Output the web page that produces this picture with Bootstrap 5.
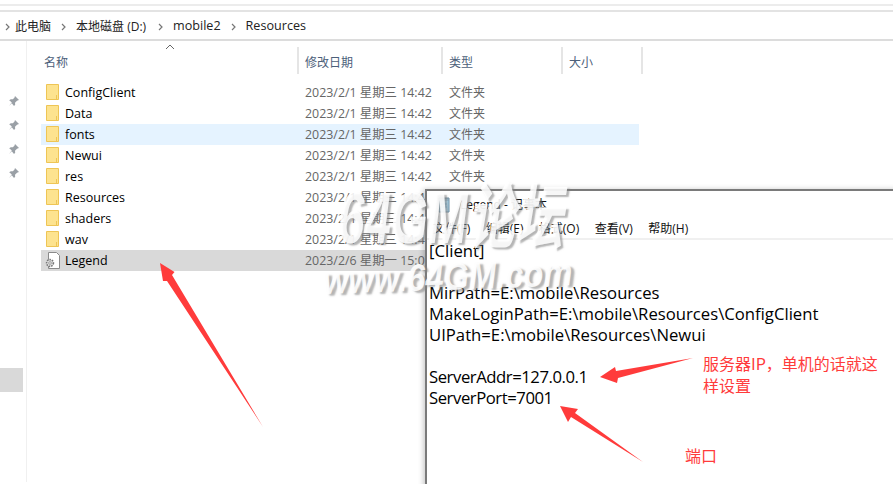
<!DOCTYPE html>
<html lang="zh-CN">
<head>
<meta charset="utf-8">
<title>Resources</title>
<link href="https://cdn.jsdelivr.net/npm/bootstrap@5.3.0/dist/css/bootstrap.min.css" rel="stylesheet">
<style>
html,body{height:484px;overflow:hidden;background:#fff}
body{font-family:"Open Sans","Noto Sans CJK SC",sans-serif;font-size:12px;color:#000;position:relative;width:893px}
.top-strip{height:12px;background:#fff;position:relative;border-bottom:2px solid #e3e3e3}
.top-strip::before{content:"";display:block;height:6px;border-bottom:2px solid #ececec}
.crumbs{height:29px;border-bottom:2px solid #dcdcdc;font-size:12px;color:#222;padding-top:2px}
.crumb-sep{width:25px;text-align:center}
.crumb-sep svg,.crumb-lead svg{display:block;margin:auto}
.crumb-lead{width:15px}
.crumb-lat{font-size:12.6px}
.crumb-disk{width:72px;flex:none;white-space:nowrap}
.main-area{height:441px}
.side-col{width:27px;border-right:1px solid #f0f0f0;padding-top:54px;flex:none;position:relative}
.side-col svg{display:block;margin:0 0 12px 8px}
.side-sel{width:23px;height:24px;background:#d9d9d9;margin-top:189px}
.list-col{width:613px;padding-left:14px}
.head-row{height:43px;margin-top:-2px;padding-top:8px;color:#4c607a;font-size:12px;position:relative}
.head-cell{height:27px;border-right:2px solid #e5e5e5;padding-left:3px;line-height:27px;flex:none}
.head-cell span{position:relative;top:2px;display:block;line-height:27px}
.hc1{width:258px}.hc2{width:144px;padding-left:6px}.hc3{width:120px;padding-left:6px}.hc4{width:80px;padding-left:6px}
.sort-caret{position:absolute;left:124px;top:5px}
.file-row{height:21px;line-height:21px;width:598px;color:#000;font-size:12.5px}
.file-row.hl{background:#e5f3ff}
.file-row.sel{background:#d9d9d9}
.ico{width:24px;padding-left:5px;flex:none;padding-top:2px}
.ico svg{display:block}
.ico-gear{margin-left:-2px}
.nm{width:240px;flex:none}
.dt{width:144px;flex:none;color:#666;font-size:12.4px}
.tp{color:#666;font-size:12px}
.np-win{position:absolute;left:425px;top:189px;width:480px;height:300px;background:#fff;border:1px solid #7a7a7a;border-width:2px 0 0 2px;box-shadow:-2px 0 5px rgba(0,0,0,.2)}
.np-title{height:28px;padding-left:11px;gap:10px;font-size:12px;color:#111}
.np-menu{height:19px;font-size:12px;color:#111;padding-left:6px;gap:15.4px;border-bottom:2px solid #f0f0f0;box-sizing:content-box}
.np-text{font-family:"Open Sans","Noto Sans CJK SC",sans-serif;font-size:16.7px;line-height:21px;padding:0 0 0 2px;color:#000;white-space:pre}
.np-num{letter-spacing:-.45px}
.marks{position:absolute;left:0;top:0;pointer-events:none}
.note{position:absolute;color:#ff3b3b;font-size:16px;line-height:22px;font-family:"Noto Sans CJK SC",sans-serif}
.n1{left:703px;top:352px;width:178px}
.n2{left:685px;top:444px}
.wm{position:absolute;font-style:italic;font-weight:700;color:rgba(255,255,255,.88);text-shadow:4px 2px 2px rgba(130,130,130,.6);white-space:nowrap;font-family:"Liberation Sans","Noto Sans CJK SC",sans-serif;transform-origin:left center}
.w1{left:338px;top:178px;font-size:72px;line-height:80px;transform:scaleX(.66)}
.w2{left:323px;top:258px;font-size:38px;line-height:46px;transform:rotate(-2deg) scaleX(.86)}
</style>
</head>
<body>
<div class="top-strip"></div>
<div class="crumbs d-flex align-items-center">
  <span class="crumb-lead"><svg width="5" height="8" viewBox="0 0 5 8"><path d="M1 1l3 3-3 3" fill="none" stroke="#777" stroke-width="1.2"/></svg></span>
  <span>此电脑</span>
  <span class="crumb-sep"><svg width="5" height="8" viewBox="0 0 5 8"><path d="M1 1l3 3-3 3" fill="none" stroke="#777" stroke-width="1.2"/></svg></span>
  <span class="crumb-disk">本地磁盘 (D:)</span>
  <span class="crumb-sep"><svg width="5" height="8" viewBox="0 0 5 8"><path d="M1 1l3 3-3 3" fill="none" stroke="#777" stroke-width="1.2"/></svg></span>
  <span class="crumb-lat">mobile2</span>
  <span class="crumb-sep"><svg width="5" height="8" viewBox="0 0 5 8"><path d="M1 1l3 3-3 3" fill="none" stroke="#777" stroke-width="1.2"/></svg></span>
  <span class="crumb-lat">Resources</span>
</div>
<div class="main-area d-flex">
  <div class="side-col">
    <svg width="12" height="12" viewBox="0 0 12 12"><path d="M7 1l4 4-2 .7-2 2 .2 2L6 11 3.8 8.2 1 11l2.8-3.6L1.2 5.2l1.6-1 2 .1 1.6-1.6z" fill="#9aa0a6"/></svg>
    <svg width="12" height="12" viewBox="0 0 12 12"><path d="M7 1l4 4-2 .7-2 2 .2 2L6 11 3.8 8.2 1 11l2.8-3.6L1.2 5.2l1.6-1 2 .1 1.6-1.6z" fill="#9aa0a6"/></svg>
    <svg width="12" height="12" viewBox="0 0 12 12"><path d="M7 1l4 4-2 .7-2 2 .2 2L6 11 3.8 8.2 1 11l2.8-3.6L1.2 5.2l1.6-1 2 .1 1.6-1.6z" fill="#9aa0a6"/></svg>
    <svg width="12" height="12" viewBox="0 0 12 12"><path d="M7 1l4 4-2 .7-2 2 .2 2L6 11 3.8 8.2 1 11l2.8-3.6L1.2 5.2l1.6-1 2 .1 1.6-1.6z" fill="#9aa0a6"/></svg>
    <div class="side-sel"></div>
  </div>
  <div class="list-col">
    <div class="head-row d-flex">
      <svg class="sort-caret" width="10" height="6" viewBox="0 0 10 6"><path d="M1 5l4-4 4 4" fill="none" stroke="#666"/></svg>
      <div class="head-cell hc1"><span>名称</span></div>
      <div class="head-cell hc2"><span>修改日期</span></div>
      <div class="head-cell hc3"><span>类型</span></div>
      <div class="head-cell hc4"><span>大小</span></div>
    </div>
    <div class="file-row d-flex"><span class="ico"><svg width="13" height="16" viewBox="0 0 13 16"><path d="M.5.5h12v15H.5z" fill="#fde38f" stroke="#eec555"/><path d="M10.5 11v4.5" stroke="#eec555"/></svg></span><span class="nm">ConfigClient</span><span class="dt">2023/2/1 星期三 14:42</span><span class="tp">文件夹</span></div>
    <div class="file-row d-flex"><span class="ico"><svg width="13" height="16" viewBox="0 0 13 16"><path d="M.5.5h12v15H.5z" fill="#fde38f" stroke="#eec555"/><path d="M10.5 11v4.5" stroke="#eec555"/></svg></span><span class="nm">Data</span><span class="dt">2023/2/1 星期三 14:42</span><span class="tp">文件夹</span></div>
    <div class="file-row hl d-flex"><span class="ico"><svg width="13" height="16" viewBox="0 0 13 16"><path d="M.5.5h12v15H.5z" fill="#fde38f" stroke="#eec555"/><path d="M10.5 11v4.5" stroke="#eec555"/></svg></span><span class="nm">fonts</span><span class="dt">2023/2/1 星期三 14:42</span><span class="tp">文件夹</span></div>
    <div class="file-row d-flex"><span class="ico"><svg width="13" height="16" viewBox="0 0 13 16"><path d="M.5.5h12v15H.5z" fill="#fde38f" stroke="#eec555"/><path d="M10.5 11v4.5" stroke="#eec555"/></svg></span><span class="nm">Newui</span><span class="dt">2023/2/1 星期三 14:42</span><span class="tp">文件夹</span></div>
    <div class="file-row d-flex"><span class="ico"><svg width="13" height="16" viewBox="0 0 13 16"><path d="M.5.5h12v15H.5z" fill="#fde38f" stroke="#eec555"/><path d="M10.5 11v4.5" stroke="#eec555"/></svg></span><span class="nm">res</span><span class="dt">2023/2/1 星期三 14:42</span><span class="tp">文件夹</span></div>
    <div class="file-row d-flex"><span class="ico"><svg width="13" height="16" viewBox="0 0 13 16"><path d="M.5.5h12v15H.5z" fill="#fde38f" stroke="#eec555"/><path d="M10.5 11v4.5" stroke="#eec555"/></svg></span><span class="nm">Resources</span><span class="dt">2023/2/1 星期三 14:42</span><span class="tp">文件夹</span></div>
    <div class="file-row d-flex"><span class="ico"><svg width="13" height="16" viewBox="0 0 13 16"><path d="M.5.5h12v15H.5z" fill="#fde38f" stroke="#eec555"/><path d="M10.5 11v4.5" stroke="#eec555"/></svg></span><span class="nm">shaders</span><span class="dt">2023/2/1 星期三 14:42</span><span class="tp">文件夹</span></div>
    <div class="file-row d-flex"><span class="ico"><svg width="13" height="16" viewBox="0 0 13 16"><path d="M.5.5h12v15H.5z" fill="#fde38f" stroke="#eec555"/><path d="M10.5 11v4.5" stroke="#eec555"/></svg></span><span class="nm">wav</span><span class="dt">2023/2/1 星期三 14:42</span><span class="tp">文件夹</span></div>
    <div class="file-row sel d-flex"><span class="ico"><svg class="ico-gear" width="16" height="17" viewBox="0 0 16 17"><path d="M4.5.5h8l3 3v13h-11z" fill="#fff" stroke="#8a8a8a"/><circle cx="6" cy="11" r="3.4" fill="#e2e2e2" stroke="#777" stroke-width="1.6" stroke-dasharray="1.5 1"/><circle cx="6" cy="11" r="1.3" fill="#fff" stroke="#777" stroke-width=".7"/></svg></span><span class="nm">Legend</span><span class="dt">2023/2/6 星期一 15:07</span><span class="tp">配置设置</span></div>
  </div>
</div>

<div class="np-win">
  <div class="np-title d-flex align-items-center">
    <svg width="12" height="16" viewBox="0 0 12 16"><path d="M1 1h10v14H1z" fill="#a9d6ee" stroke="#6c8ea3"/><path d="M1 3h10M1 1.5h10" stroke="#7f9caf"/><path d="M3 7h6M3 10h6" stroke="#6fb0d6"/></svg>
    <span>Legend - 记事本</span>
  </div>
  <div class="np-menu d-flex align-items-center">
    <span>文件(F)</span><span>编辑(E)</span><span>格式(O)</span><span>查看(V)</span><span>帮助(H)</span>
  </div>
  <div class="np-text">[Client]

MirPath=E:\mobile\Resources
MakeLoginPath=E:\mobile\Resources\ConfigClient
UIPath=E:\mobile\Resources\Newui

<span class="np-num">ServerAddr=127.0.0.1</span>
<span class="np-num">ServerPort=7001</span></div>
</div>

<div class="wm w1">64GM论坛</div>
<div class="wm w2">www.64GM.com</div>

<svg class="marks" width="893" height="484" viewBox="0 0 893 484">
  <polygon points="160,263 174.5,272 172,275 263,427 167,281 163,281" fill="#ff3b3b"/>
  <polygon points="600,377 615,367 616,371 693,358 618,378 617,383" fill="#ff3b3b"/>
  <polygon points="560,406 578,409 575,413 643,462 571,417 568,422" fill="#ff3b3b"/>
</svg>
<div class="note n1">服务器IP，单机的话就这样设置</div>
<div class="note n2">端口</div>
</body>
</html>
